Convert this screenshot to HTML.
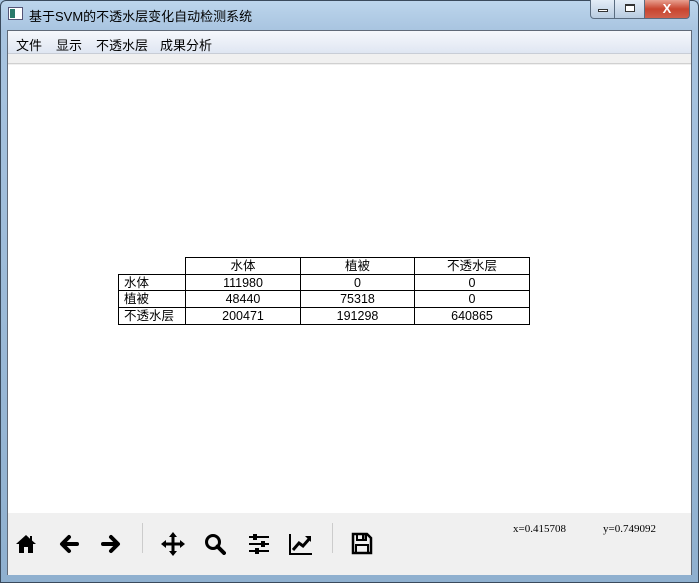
<!DOCTYPE html>
<html><head><meta charset="utf-8"><style>
*{margin:0;padding:0;box-sizing:border-box}
body{width:699px;height:583px;overflow:hidden;position:relative;font-family:"Liberation Sans","Noto Sans CJK SC",sans-serif;background:#a9c6e2}
.frame{position:absolute;left:0;top:0;width:699px;height:583px;background:linear-gradient(180deg,#bcd5ec 0,#a8c4e0 30px,#8fb0cf 100%);border:1px solid #3a4a5c;border-radius:6px 6px 0 0}
.title{position:absolute;left:29px;top:6px;font-size:13px;color:#000}
.icon{position:absolute;left:8px;top:7px;width:15px;height:13px;border:1px solid #557;background:#fff}
.icon:before{content:"";position:absolute;left:1px;top:1px;width:5px;height:9px;background:#2a7a6a}
.btn{position:absolute;top:0;height:19px;border:1px solid #5a6c80;border-top:none}
.client{position:absolute;left:7px;top:30px;width:685px;height:545px;background:#f0f0f0;border:1px solid #606a78}
.menu{position:absolute;left:0;top:0;width:683px;height:22px;background:linear-gradient(#f6f8fc,#dfe6f2);font-size:13px}
.menu span{position:absolute;top:4px}
.strip{position:absolute;left:0;top:22px;width:683px;height:11px;background:#f0f0f0;border-top:1px solid #c8cdd6;border-bottom:1px solid #d0d0d0}
.canvas{position:absolute;left:0;top:34px;width:683px;height:448px;background:#fff}
.tb{position:absolute;left:0;top:482px;width:683px;height:62px;background:#f0f0f0}
table{position:absolute;border-collapse:collapse;font-size:12.5px;font-family:"Liberation Sans","Noto Sans CJK SC",sans-serif}
td{border:1px solid #000;height:16.7px;line-height:14px;text-align:center;padding:0}
td.h{text-align:left;padding-left:5px}
.coord{position:absolute;top:10px;font-family:"Liberation Serif","Noto Serif CJK SC",serif;font-size:11px}
svg{position:absolute}
.sep{position:absolute;top:10px;width:1px;height:30px;background:#ccc}
</style></head><body>
<div class="frame"></div>
<div class="icon"></div>
<div class="title">基于SVM的不透水层变化自动检测系统</div>
<div class="btn" style="left:590px;width:25px;background:linear-gradient(#e4edf7,#b8cbe0);border-radius:0 0 0 4px"><div style="position:absolute;left:7px;top:9px;width:10px;height:3px;border:1px solid #333;background:#fff"></div></div>
<div class="btn" style="left:614px;width:31px;background:linear-gradient(#e4edf7,#b8cbe0)"><div style="position:absolute;left:10px;top:4px;width:10px;height:8px;border:1px solid #333;border-top-width:2px;background:#fff"></div></div>
<div class="btn" style="left:644px;width:46px;background:linear-gradient(#e8a090,#c8452f 50%,#d0604c);border-radius:0 0 4px 0;color:#fff;font-weight:bold;font-size:13px;text-align:center;line-height:17px">X</div>
<div class="client">
 <div class="menu"><span style="left:8px">文件</span><span style="left:48px">显示</span><span style="left:88px">不透水层</span><span style="left:152px">成果分析</span></div>
 <div class="strip"></div>
 <div class="canvas">
  <table style="left:110px;top:192px">
   <tr><td style="border:none;width:67px"></td><td style="width:115px">水体</td><td style="width:114px">植被</td><td style="width:115px">不透水层</td></tr>
   <tr><td class="h">水体</td><td>111980</td><td>0</td><td>0</td></tr>
   <tr><td class="h">植被</td><td>48440</td><td>75318</td><td>0</td></tr>
   <tr><td class="h">不透水层</td><td>200471</td><td>191298</td><td>640865</td></tr>
  </table>
 </div>
 <div class="tb">
  <svg style="left:7px;top:21px" width="22" height="20" viewBox="0 0 22 20"><path d="M11 1 L1 10 L4 10 L4 19 L9 19 L9 13 L13 13 L13 19 L18 19 L18 10 L21 10 L17 6.5 L17 2 L15 2 L15 4.8 Z" fill="#000"/></svg>
  <svg style="left:51px;top:21px" width="20" height="20" viewBox="0 0 20 20"><path d="M18 10 H4 M10 3 L3 10 L10 17" stroke="#000" stroke-width="4" fill="none" stroke-linecap="round" stroke-linejoin="round"/></svg>
  <svg style="left:93px;top:21px" width="20" height="20" viewBox="0 0 20 20"><path d="M2 10 H16 M10 3 L17 10 L10 17" stroke="#000" stroke-width="4" fill="none" stroke-linecap="round" stroke-linejoin="round"/></svg>
  <div class="sep" style="left:134px"></div>
  <svg style="left:153px;top:19px" width="24" height="24" viewBox="0 0 24 24"><path d="M12 3 V21 M3 12 H21" stroke="#000" stroke-width="3"/><path d="M12 0 L16 5 H8 Z M12 24 L16 19 H8 Z M0 12 L5 8 V16 Z M24 12 L19 8 V16 Z" fill="#000"/></svg>
  <svg style="left:196px;top:20px" width="22" height="22" viewBox="0 0 22 22"><circle cx="9" cy="9" r="6.5" stroke="#000" stroke-width="3" fill="none"/><path d="M13.5 13.5 L20 20" stroke="#000" stroke-width="4" stroke-linecap="round"/></svg>
  <svg style="left:240px;top:20px" width="22" height="22" viewBox="0 0 22 22"><path d="M1 4 H21 M1 11 H21 M1 18 H21" stroke="#000" stroke-width="2"/><rect x="5" y="1" width="4" height="6" fill="#000"/><rect x="13" y="8" width="4" height="6" fill="#000"/><rect x="7" y="15" width="4" height="6" fill="#000"/></svg>
  <svg style="left:281px;top:20px" width="24" height="22" viewBox="0 0 24 22"><path d="M1 1 V21 H23" stroke="#000" stroke-width="2" fill="none"/><path d="M4 17 L10 10 L14 13 L21 5" stroke="#000" stroke-width="3" fill="none"/><path d="M16 3 H22 V9 Z" fill="#000"/></svg>
  <div class="sep" style="left:324px"></div>
  <svg style="left:343px;top:19px" width="22" height="23" viewBox="0 0 22 23"><path d="M2 2 H16 L20 6 V21 H2 Z" stroke="#000" stroke-width="2.5" fill="none"/><path d="M6 2 V8 H15 V2" stroke="#000" stroke-width="2" fill="none"/><rect x="11" y="3" width="2.5" height="4" fill="#000"/><path d="M5 21 V13 H17 V21" stroke="#000" stroke-width="2" fill="none"/></svg>
  <div class="coord" style="left:505px">x=0.415708</div>
  <div class="coord" style="left:595px">y=0.749092</div>
 </div>
</div>
</body></html>
